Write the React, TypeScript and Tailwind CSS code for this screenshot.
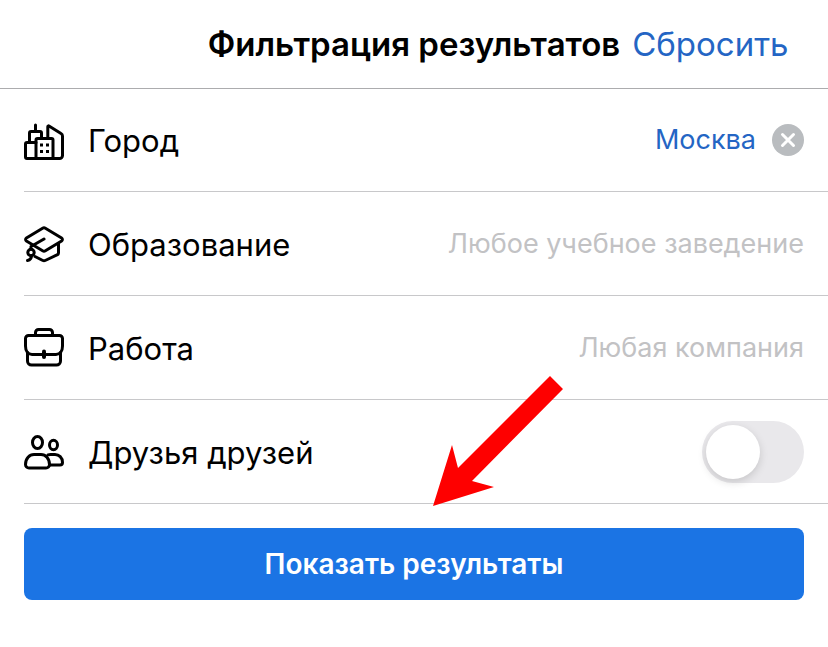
import { useState, type ReactNode } from "react";

interface FilterRowProps {
  icon: ReactNode;
  label: string;
  children: ReactNode;
}

function CityIcon() {
  return (
    <svg viewBox="0 0 40 40" className="size-10" fill="none" stroke="currentColor" strokeWidth="3" strokeLinecap="round" strokeLinejoin="round" aria-hidden="true">
      <path d="M12 22.500H3A1.500 1.500 0 0 0 1.500 24v13A1.500 1.500 0 0 0 3 38.500h32.500a3 3 0 0 0 3-3V16a3 3 0 0 0-1.500-2.500L25 6a.8.8 0 0 0-1.200.7V18" />
      <path d="M12 38V20a1.500 1.500 0 0 1 1.500-1.500h14A1.500 1.500 0 0 1 29 20v18" />
      <path d="M5.500 22v-9A1.500 1.500 0 0 1 7 11.500h9a1.500 1.500 0 0 1 1.500 1.500v5M11.500 11V5" />
      <path d="M16 23.500h3v3h-3zM22 23.500h3v3h-3zM16 30h3v3h-3zM22 30h3v3h-3z" fill="currentColor" stroke="none" />
    </svg>
  );
}

function EducationIcon() {
  return (
    <svg viewBox="0 0 40 40" className="size-10" fill="none" stroke="currentColor" strokeWidth="3" strokeLinecap="round" strokeLinejoin="round" aria-hidden="true">
      <path d="M18.600 4.200a2.800 2.800 0 0 1 2.800 0L37.600 14a1.800 1.800 0 0 1 0 3L21.400 26.800a2.800 2.800 0 0 1-2.800 0L2.400 17a1.800 1.800 0 0 1 0-3z" />
      <path d="M20 15 7 22.500v2.500M34.500 19.500v9.500a2 2 0 0 1-1 1.700L21.200 36.500a2.800 2.800 0 0 1-2.400 0L11 32.500" />
      <circle cx="7" cy="28.500" r="3.200" />
      <path d="M7.500 31.500c0 2.500-1.500 4.500-4 5" />
    </svg>
  );
}

function WorkIcon() {
  return (
    <svg viewBox="0 0 40 40" className="size-10" fill="none" stroke="currentColor" strokeWidth="3" strokeLinecap="round" strokeLinejoin="round" aria-hidden="true">
      <path d="M4.500 7.500h31a3 3 0 0 1 3 3V18c0 5-2.500 8.500-6.500 8.500H8c-4 0-6.500-3.500-6.500-8.500v-7.500a3 3 0 0 1 3-3z" />
      <path d="M11.500 7V4.500a3 3 0 0 1 3-3h11a3 3 0 0 1 3 3V7" />
      <path d="M3.500 24.500V33a4 4 0 0 0 4 4h25a4 4 0 0 0 4-4v-8.500" />
      <path d="M20 23.500v5.500" strokeWidth="4" />
    </svg>
  );
}

function FriendsIcon() {
  return (
    <svg viewBox="0 0 40 40" className="size-10" fill="none" stroke="currentColor" strokeWidth="3" strokeLinecap="round" strokeLinejoin="round" aria-hidden="true">
      <ellipse cx="13.500" cy="10.500" rx="5" ry="6" />
      <ellipse cx="29.500" cy="13" rx="4" ry="4.700" />
      <path d="M1.500 32.500C1.500 26.500 5.500 22.500 10 22.500h7c4.500 0 8.500 4 8.500 10a3.500 3.500 0 0 1-3.500 3.500H5a3.500 3.500 0 0 1-3.500-3.500z" />
      <path d="M24 22.900c.8-.3 1.600-.4 2.500-.4H31c4 0 7.500 3 7.500 8a2.500 2.500 0 0 1-2.500 2.500h-9.500" />
    </svg>
  );
}

function FilterRow({ icon, label, children }: FilterRowProps) {
  return (
    <li className="ml-6 flex h-[104px] items-center border-b border-[#c8c8ca] pr-6">
      {icon}
      <span className="ml-6 flex-1 pt-0.5 text-[31px] leading-10 text-black">{label}</span>
      {children}
    </li>
  );
}

export default function App() {
  const [city, setCity] = useState("Москва");
  const [friendsOfFriends, setFriendsOfFriends] = useState(false);

  const reset = () => {
    setCity("");
    setFriendsOfFriends(false);
  };

  return (
    <main className="relative min-h-screen bg-white font-['Inter','Liberation_Sans',sans-serif] text-black">
      <header className="grid h-[88px] grid-cols-[1fr_auto_1fr] items-center shadow-[0_1px_0_#acacae]">
        <h1 className="col-start-2 text-[33px] leading-10 font-semibold">Фильтрация результатов</h1>
        <button type="button" onClick={reset} className="ml-3 justify-self-start text-[33px] leading-10 text-[#2465c4]">
          Сбросить
        </button>
      </header>

      <ul>
        <FilterRow icon={<CityIcon />} label="Город">
          <button type="button" className={city ? "text-[27px] leading-8 text-[#2465c4]" : "text-[27px] leading-8 text-[#c2c2c4]"}>
            {city || "Любой город"}
          </button>
          {city && (
            <button
              type="button"
              aria-label="Очистить город"
              onClick={() => setCity("")}
              className="ml-4 flex size-8 items-center justify-center rounded-full bg-[#b9bcbf] text-white"
            >
              <svg viewBox="0 0 32 32" className="size-8" fill="none" stroke="currentColor" strokeWidth="3" strokeLinecap="round" aria-hidden="true">
                <path d="m10.500 10.500 11 11m0-11-11 11" />
              </svg>
            </button>
          )}
        </FilterRow>

        <FilterRow icon={<EducationIcon />} label="Образование">
          <button type="button" className="text-[27px] leading-8 text-[#c2c2c4]">
            Любое учебное заведение
          </button>
        </FilterRow>

        <FilterRow icon={<WorkIcon />} label="Работа">
          <button type="button" className="text-[27px] leading-8 text-[#c2c2c4]">
            Любая компания
          </button>
        </FilterRow>

        <FilterRow icon={<FriendsIcon />} label="Друзья друзей">
          <input
            type="checkbox"
            role="switch"
            aria-label="Друзья друзей"
            checked={friendsOfFriends}
            onChange={(e) => setFriendsOfFriends(e.target.checked)}
            className="flex h-[62px] w-[102px] cursor-pointer appearance-none items-center rounded-full bg-[#e9e8eb] px-1 before:size-[54px] before:rounded-full before:bg-white before:shadow-[0_3px_8px_rgba(0,0,0,0.15)] before:transition-transform checked:bg-[#1b74e4] checked:before:translate-x-10"
          />
        </FilterRow>
      </ul>

      <div className="p-6">
        <button type="button" className="h-[72px] w-full rounded-lg bg-[#1b74e4] text-[28px] leading-8 font-semibold text-white">
          Показать результаты
        </button>
      </div>

      <svg viewBox="0 0 130 130" className="pointer-events-none absolute top-[376px] left-[433px] size-[130px]" aria-hidden="true">
        <path d="M117 0 130 13 39 105 61 111 0 130 19 69 25 92z" fill="#fe0000" />
      </svg>
    </main>
  );
}
